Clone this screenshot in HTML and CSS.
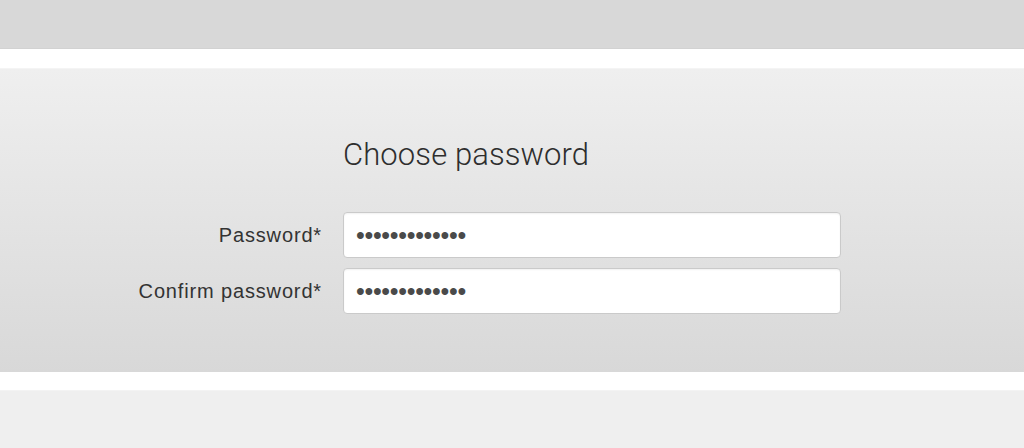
FILE: index.html
```html
<!DOCTYPE html>
<html>
<head>
<meta charset="utf-8">
<link rel="stylesheet" href="styles.css">
</head>
<body>
<div class="top-bar"></div>
<main class="panel">
  <form class="form">
    <div class="spacer"></div>
    <h1 class="title">Choose password</h1>
    <label class="label" for="pw">Password*</label>
    <input class="field" id="pw" type="password" value="abcdefghijklm">
    <label class="label" for="pw2">Confirm password*</label>
    <input class="field" id="pw2" type="password" value="abcdefghijklm">
  </form>
</main>
<div class="bottom-bar"></div>
</body>
</html>
```
FILE: styles.css
```css
html, body {
  margin: 0;
  padding: 0;
  background: #ffffff;
  height: 448px;
  overflow: hidden;
}
body {
  display: flex;
  flex-direction: column;
  font-family: "Liberation Sans", Arial, sans-serif;
}
.top-bar {
  height: 48px;
  background: #d8d8d8;
  border-bottom: 1px solid #d2d2d2;
  flex: none;
}
.panel {
  margin-top: 19px;
  height: 304px;
  flex: none;
  box-sizing: border-box;
  background: linear-gradient(to bottom, #efefef 0%, #d8d8d8 100%);
  border-top: 1px solid #f4f4f4;
  padding-top: 68px;
}
.form {
  display: grid;
  grid-template-columns: 322px 498px;
  column-gap: 21px;
  row-gap: 10px;
  align-items: center;
}
.title {
  margin: 0 0 29px 0;
  font-family: Roboto, "Liberation Sans", sans-serif;
  font-weight: 300;
  font-size: 31px;
  line-height: 36px;
  color: #2e2e2e;
  letter-spacing: 0.1px;
}
.label {
  text-align: right;
  font-size: 20px;
  color: #333333;
  letter-spacing: 0.85px;
}
.field {
  box-sizing: border-box;
  height: 46px;
  width: 498px;
  margin: 0;
  padding: 0 12px 0 12px;
  border: 1px solid #cacaca;
  border-radius: 4px;
  background: #ffffff;
  box-shadow: inset 0 1px 2px rgba(0,0,0,0.06);
  font-family: "Liberation Sans", Arial, sans-serif;
  font-size: 25px;
  color: #4a4a4a;
  letter-spacing: -0.3px;
  outline: none;
}
.bottom-bar {
  margin-top: 18px;
  flex: 1;
  background: #efefef;
  border-top: 1px solid #f3f3f3;
}
```
